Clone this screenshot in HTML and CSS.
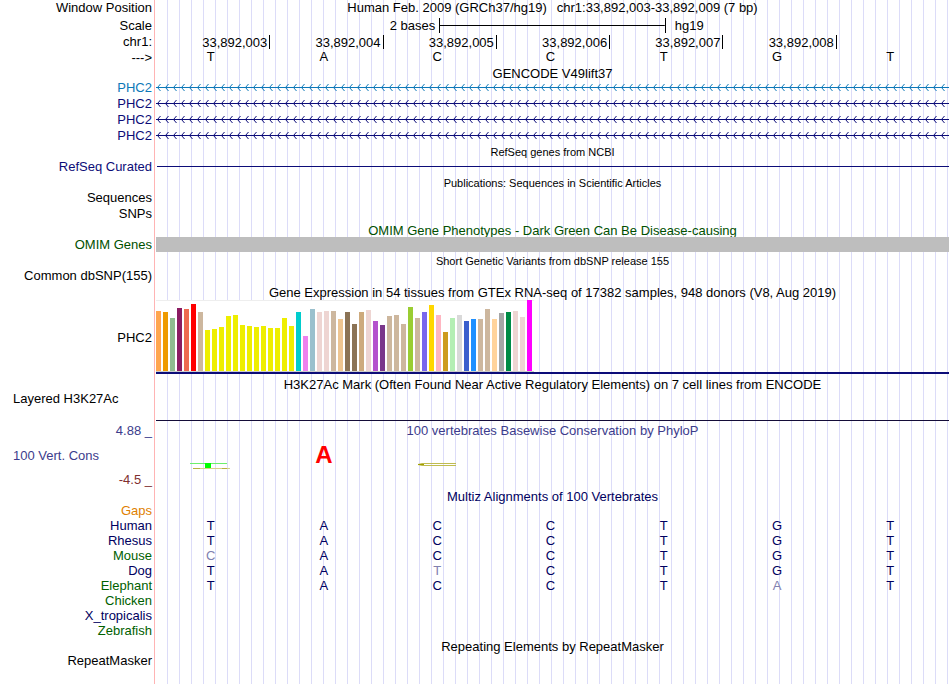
FILE: index.html
```html
<!DOCTYPE html>
<html lang="en">
<head>
    <meta charset="UTF-8">
    <meta name="viewport" content="width=device-width, initial-scale=1.0">
    <title>chr1:33,892,003-33,892,009</title>
    <link rel="stylesheet" href="styles.css">
</head>
<body>

<main class="browser">
    <div class="row">
        <div class="label">Window Position</div>
        <div class="title position"><span>Human Feb. 2009 (GRCh37/hg19)</span><span>chr1:33,892,003-33,892,009 (7 bp)</span></div>
    </div>
    <div class="row scale-row">
        <div class="label">Scale</div>
        <div class="scale">
            <span class="scale-left">2 bases</span>
            <span class="scale-bar"></span>
            <span class="scale-right">hg19</span>
        </div>
    </div>
    <div class="row">
        <div class="label">chr1:</div>
        <div class="columns ruler">
            <span>33,892,003</span><span>33,892,004</span><span>33,892,005</span><span>33,892,006</span><span>33,892,007</span><span>33,892,008</span>
        </div>
    </div>
    <div class="row thin">
        <div class="label">---&gt;</div>
        <div class="columns bases">
            <span>T</span><span>A</span><span>C</span><span>C</span><span>T</span><span>G</span><span>T</span>
        </div>
    </div>

    <!-- GENCODE -->
    <div class="row thin"><div class="title">GENCODE V49lift37</div></div>
    <div class="row blue">
        <div class="label">PHC2</div>
        <svg class="intron" width="100%" height="16">
            <defs>
                <pattern id="arrowBlue" width="8" height="16" patternUnits="userSpaceOnUse">
                    <path d="M0 7.5H8M4.5 4L1.5 7.5L4.5 11" fill="none" stroke="#0c78b8"/>
                </pattern>
            </defs>
            <rect width="100%" height="16" fill="url(#arrowBlue)"/>
        </svg>
    </div>
    <div class="row navy">
        <div class="label">PHC2</div>
        <svg class="intron" width="100%" height="16">
            <defs>
                <pattern id="arrowNavy" width="8" height="16" patternUnits="userSpaceOnUse">
                    <path d="M0 7.5H8M4.5 4L1.5 7.5L4.5 11" fill="none" stroke="#0c0c78"/>
                </pattern>
            </defs>
            <rect width="100%" height="16" fill="url(#arrowNavy)"/>
        </svg>
    </div>
    <div class="row navy">
        <div class="label">PHC2</div>
        <svg class="intron" width="100%" height="16"><rect width="100%" height="16" fill="url(#arrowNavy)"/></svg>
    </div>
    <div class="row navy">
        <div class="label">PHC2</div>
        <svg class="intron" width="100%" height="16"><rect width="100%" height="16" fill="url(#arrowNavy)"/></svg>
    </div>

    <!-- RefSeq -->
    <div class="row thin"><div class="title small">RefSeq genes from NCBI</div></div>
    <div class="row navy">
        <div class="label">RefSeq Curated</div>
        <div class="line"></div>
    </div>

    <!-- Publications -->
    <div class="row thin"><div class="title small">Publications: Sequences in Scientific Articles</div></div>
    <div class="row"><div class="label">Sequences</div></div>
    <div class="row"><div class="label">SNPs</div></div>

    <!-- OMIM -->
    <div class="row thin omim"><div class="title">OMIM Gene Phenotypes - Dark Green Can Be Disease-causing</div></div>
    <div class="row omim">
        <div class="label">OMIM Genes</div>
        <div class="band"></div>
    </div>

    <!-- dbSNP -->
    <div class="row thin"><div class="title small">Short Genetic Variants from dbSNP release 155</div></div>
    <div class="row"><div class="label">Common dbSNP(155)</div></div>

    <!-- GTEx -->
    <div class="row thin"><div class="title">Gene Expression in 54 tissues from GTEx RNA-seq of 17382 samples, 948 donors (V8, Aug 2019)</div></div>
    <div class="row gtex-row">
        <div class="label">PHC2</div>
        <div class="gtex">
            <div class="bars" id="bars"></div>
        </div>
    </div>

    <!-- H3K27Ac -->
    <div class="row thin"><div class="title">H3K27Ac Mark (Often Found Near Active Regulatory Elements) on 7 cell lines from ENCODE</div></div>
    <div class="row h3k-row">
        <div class="label left">Layered H3K27Ac</div>
        <div class="baseline"></div>
    </div>

    <!-- Conservation -->
    <div class="row thin cons">
        <div class="label">4.88 _</div>
        <div class="title">100 vertebrates Basewise Conservation by PhyloP</div>
    </div>
    <div class="row logo-row cons">
        <div class="label left">100 Vert. Cons</div>
        <div class="columns bases logo">
            <svg width="42" height="34">
                <rect x="0" y="25" width="37" height="1" fill="#6cf06c"/>
                <rect x="15" y="25" width="6" height="5" fill="#00ff00"/>
                <rect x="3" y="30" width="37" height="1" fill="#d8d088"/>
                <rect x="3" y="30" width="7" height="1" fill="#b8b040"/>
                <rect x="32" y="30" width="5" height="1" fill="#b8b040"/>
            </svg>
            <svg width="42" height="34">
                <text class="logo-letter" x="21" y="25" text-anchor="middle">A</text>
            </svg>
            <svg width="42" height="34">
                <path d="M40 25.5H6L2 26.5L6 27.5H40" fill="none" stroke="#c0bc50"/>
                <rect x="2" y="26" width="6" height="1" fill="#a0a000"/>
            </svg>
        </div>
    </div>
    <div class="row minus"><div class="label">-4.5 _</div></div>

    <!-- Multiz -->
    <div class="row thin species"><div class="title">Multiz Alignments of 100 Vertebrates</div></div>
    <table class="multiz">
        <tbody>
            <tr class="gaps"><th scope="row">Gaps</th><td></td><td></td><td></td><td></td><td></td><td></td><td></td></tr>
            <tr><th scope="row">Human</th><td>T</td><td>A</td><td>C</td><td>C</td><td>T</td><td>G</td><td>T</td></tr>
            <tr><th scope="row">Rhesus</th><td>T</td><td>A</td><td>C</td><td>C</td><td>T</td><td>G</td><td>T</td></tr>
            <tr class="green"><th scope="row">Mouse</th><td class="diff">C</td><td>A</td><td>C</td><td>C</td><td>T</td><td>G</td><td>T</td></tr>
            <tr><th scope="row">Dog</th><td>T</td><td>A</td><td class="diff">T</td><td>C</td><td>T</td><td>G</td><td>T</td></tr>
            <tr class="green"><th scope="row">Elephant</th><td>T</td><td>A</td><td>C</td><td>C</td><td>T</td><td class="diff">A</td><td>T</td></tr>
            <tr class="green"><th scope="row">Chicken</th><td></td><td></td><td></td><td></td><td></td><td></td><td></td></tr>
            <tr><th scope="row">X_tropicalis</th><td></td><td></td><td></td><td></td><td></td><td></td><td></td></tr>
            <tr class="green"><th scope="row">Zebrafish</th><td></td><td></td><td></td><td></td><td></td><td></td><td></td></tr>
        </tbody>
    </table>

    <!-- RepeatMasker -->
    <div class="row thin"><div class="title">Repeating Elements by RepeatMasker</div></div>
    <div class="row thin"><div class="label">RepeatMasker</div></div>
</main>

<script>
// one [height, color] per tissue
const tissues = [
    [60, '#ffa54f'], [59, '#ee9a00'], [53, '#8fbc8f'], [63, '#8b1c62'], [62, '#ee6a50'], [67, '#ff0000'],
    [59, '#cdb79e'], [41, '#eeee00'], [42, '#eeee00'], [44, '#eeee00'], [55, '#eeee00'], [56, '#eeee00'],
    [46, '#eeee00'], [45, '#eeee00'], [44, '#eeee00'], [45, '#eeee00'], [43, '#eeee00'], [43, '#eeee00'],
    [53, '#eeee00'], [45, '#eeee00'], [59, '#00cdcd'], [35, '#ee82ee'], [62, '#9ac0cd'], [59, '#eed5d2'],
    [60, '#eed5d2'], [60, '#cdb79e'], [52, '#eec591'], [59, '#8b7355'], [47, '#8b7355'], [59, '#cdaa7d'],
    [61, '#eed5d2'], [50, '#b452cd'], [46, '#7a378b'], [55, '#cdb79e'], [56, '#cdb79e'], [47, '#cdb79e'],
    [64, '#9acd32'], [53, '#cdb79e'], [59, '#7a67ee'], [66, '#ffd700'], [56, '#ffb6c1'], [39, '#cd9b1d'],
    [53, '#b4eeb4'], [56, '#d9d9d9'], [50, '#3a5fcd'], [52, '#1e90ff'], [52, '#cdb79e'], [62, '#cdb79e'],
    [52, '#ffd39b'], [58, '#a6a6a6'], [59, '#008b45'], [60, '#eed5d2'], [54, '#eed5d2'], [71, '#ff00ff']
];

const bars = document.getElementById('bars');
tissues.forEach(item => {
    let bar = document.createElement('span');
    bar.style.height = item[0] + 'px';
    bar.style.backgroundColor = item[1];
    bars.appendChild(bar);
});
</script>

</body>
</html>
```
FILE: styles.css
```css
body {
    margin: 0;
    background-color: #fff;
    color: #000;
    font-family: "Liberation Sans", Arial, sans-serif;
    font-size: 13px;
    line-height: 15px;
}

/* red divider and the vertical guide lines every 12px */
.browser {
    margin-right: 1px;
    min-height: 100vh;
    background-image:
        linear-gradient(#ffb4b4, #ffb4b4),
        repeating-linear-gradient(to right, transparent 0, transparent 11px, #dcdcf8 11px, #dcdcf8 12px);
    background-position: 154px 0, 156px 0;
    background-size: 1px 100%, 100% 100%;
    background-repeat: no-repeat;
}

.row {
    display: grid;
    grid-template-columns: 152px 1fr;
    column-gap: 4px;
    height: 16px;
    white-space: nowrap;
}

.thin {
    height: 15px;
}

.label {
    grid-column: 1;
    text-align: right;
}

.left {
    text-align: left;
    padding-left: 13px;
}

.title {
    grid-column: 2;
    line-height: 17px;
    text-align: center;
}

.small {
    font-size: 11px;
}

.position {
    display: flex;
    justify-content: center;
    gap: 10px;
    line-height: 15px;
}

.blue { color: #0c78b8; }
.navy { color: #0c0c78; }
.omim { color: #005000; }
.cons { color: #3c3c8c; }
.minus { color: #803030; }
.species { color: #000060; }

.cons .title {
    line-height: 15px;
}

/* scale and ruler */
.scale-row {
    height: 18px;
    align-items: center;
}

.scale {
    display: grid;
    grid-template-columns: 2.5fr 2fr 2.5fr;
    align-items: center;
}

.scale-left {
    text-align: right;
    padding-right: 4px;
}

.scale-bar {
    height: 15px;
    border-left: 1px solid #000;
    border-right: 1px solid #000;
    background: linear-gradient(#000, #000) center / 100% 1px no-repeat;
}

.scale-right {
    padding-left: 9px;
}

.columns {
    display: grid;
    grid-template-columns: repeat(7, 1fr);
}

.ruler span {
    height: 14px;
    margin-top: 1px;
    padding-right: 2px;
    border-right: 1px solid #000;
    margin-right: -1px;
    text-align: right;
}

.bases {
    justify-items: center;
    margin: 0 2px 0 -2px;
    line-height: 14px;
}

/* tracks */
.intron {
    display: block;
}

.line {
    height: 1px;
    margin: 7px 0 0 1px;
    background-color: #0c0c78;
}

.band {
    height: 15px;
    background-color: #bebebe;
}

.gtex-row {
    height: 77px;
    align-items: center;
}

.gtex {
    height: 72px;
    padding-bottom: 1px;
    margin-bottom: 2px;
    background: linear-gradient(#0c0c78, #0c0c78) bottom / 100% 2px no-repeat;
    padding-bottom: 2px;
}

.bars {
    display: inline-flex;
    align-items: flex-end;
    gap: 2px;
    height: 71px;
    padding-right: 2px;
    vertical-align: top;
    background-color: #fff;
    border-bottom: 1px solid #ccc;
    box-shadow: inset 0 1px #eee;
}

.bars span {
    width: 5px;
}

.h3k-row {
    height: 32px;
}

.baseline {
    height: 29px;
    border-bottom: 1px solid #140c38;
}

.logo-row {
    height: 34px;
    align-items: center;
}

.logo-letter {
    font-size: 24px;
    font-weight: bold;
    fill: #ff0000;
}

/* alignments */
.multiz {
    width: 100%;
    table-layout: fixed;
    border-collapse: collapse;
    color: #000060;
}

.multiz th,
.multiz td {
    height: 15px;
    padding: 0;
    font-weight: normal;
    text-align: center;
}

.multiz td {
    padding-right: 4px;
}

.multiz th {
    width: 152px;
    padding-right: 4px;
    text-align: right;
}

.multiz .gaps th {
    color: #e08000;
}

.multiz .green th {
    color: #006000;
}

.multiz .diff {
    color: #8080b0;
}
```
